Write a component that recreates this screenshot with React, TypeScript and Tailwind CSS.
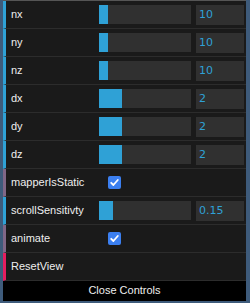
import React from "react";

const font = { fontFamily: '"Liberation Sans", Arial, sans-serif' };

function NumRow({ label, value, pct }: { label: string; value: string; pct: number }) {
  return (
    <div className="h-[28px] flex items-center border-b border-[#2c2c2c] border-l-[3px] border-l-[#2fa1d6] pl-[5px] pr-[2px]">
      <div className="w-[88px] text-[11px] text-[#eeeeee] leading-[27px] truncate">{label}</div>
      <div className="w-[92px] h-[19px] bg-[#303030] relative">
        <div className="h-full bg-[#2fa1d6]" style={{ width: `${pct}px` }} />
      </div>
      <div className="ml-[5px] w-[48px] h-[20px] bg-[#303030] text-[#2fa1d6] text-[11px] leading-[20px] pl-[3px] font-['DejaVu_Sans',sans-serif]">
        {value}
      </div>
    </div>
  );
}

function Check() {
  return (
    <div className="w-[13px] h-[13px] rounded-[2px] bg-[#3b7ff0] flex items-center justify-center">
      <svg width="11" height="11" viewBox="0 0 11 11">
        <path d="M2.2 5.8 L4.4 8 L8.8 3" stroke="white" strokeWidth="1.8" fill="none" strokeLinecap="round" strokeLinejoin="round" />
      </svg>
    </div>
  );
}

function BoolRow({ label }: { label: string }) {
  return (
    <div className="h-[28px] flex items-center border-b border-[#2c2c2c] border-l-[3px] border-l-[#806787] pl-[5px] pr-[2px]">
      <div className="w-[97px] text-[11px] text-[#eeeeee] leading-[27px]">{label}</div>
      <Check />
    </div>
  );
}

export default function App() {
  return (
    <div className="w-[250px] h-[303px] bg-[#3e5b7b] pl-[3px]" style={font}>
      <div className="w-[243px] bg-[#1a1a1a] border-t border-[#555555]">
        <NumRow label="nx" value="10" pct={9} />
        <NumRow label="ny" value="10" pct={9} />
        <NumRow label="nz" value="10" pct={9} />
        <NumRow label="dx" value="2" pct={23} />
        <NumRow label="dy" value="2" pct={23} />
        <NumRow label="dz" value="2" pct={23} />
        <BoolRow label="mapperIsStatic" />
        <NumRow label="scrollSensitivty" value="0.15" pct={14} />
        <BoolRow label="animate" />
        <div className="h-[28px] flex items-center border-b border-[#2c2c2c] border-l-[3px] border-l-[#e61d5f] pl-[5px]">
          <div className="text-[11px] text-[#eeeeee] leading-[27px]">ResetView</div>
        </div>
        <div className="h-[20px] bg-black text-[#eeeeee] text-[11px] leading-[19px] text-center">Close Controls</div>
      </div>
    </div>
  );
}
